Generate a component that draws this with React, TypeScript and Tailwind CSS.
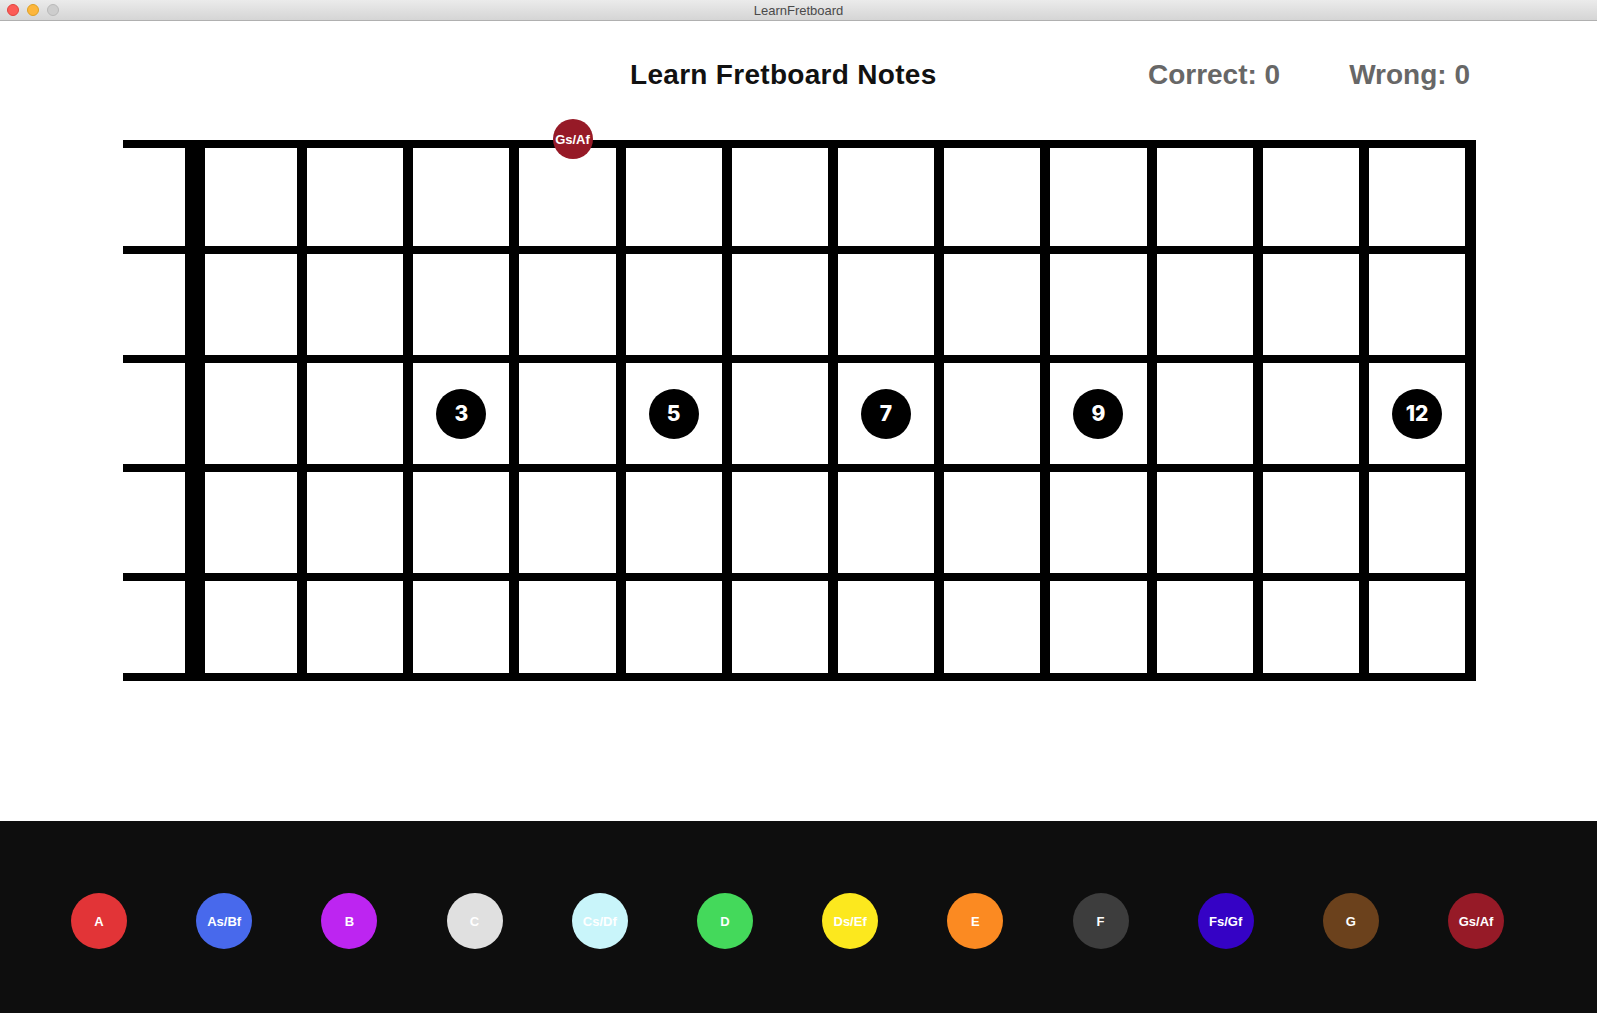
import React from "react";

const notes: { n: string; cls: string }[] = [
  { n: "A", cls: "bg-[#e23437]" },
  { n: "As/Bf", cls: "bg-[#4869ec]" },
  { n: "B", cls: "bg-[#bd25f1]" },
  { n: "C", cls: "bg-[#e0e0e0]" },
  { n: "Cs/Df", cls: "bg-[#c9f5fa]" },
  { n: "D", cls: "bg-[#44d95b]" },
  { n: "Ds/Ef", cls: "bg-[#fce81e]" },
  { n: "E", cls: "bg-[#fb8a22]" },
  { n: "F", cls: "bg-[#3d3d3d]" },
  { n: "Fs/Gf", cls: "bg-[#3502c5]" },
  { n: "G", cls: "bg-[#6b411c]" },
  { n: "Gs/Af", cls: "bg-[#961a27]" },
];

const rowHeights = ["h-[106px]", "h-[109px]", "h-[109px]", "h-[109px]", "h-[108px]"];
const markers: Record<number, string> = { 3: "3", 5: "5", 7: "7", 9: "9", 12: "12" };

function Marker({ label }: { label: string }) {
  return (
    <div className="w-[50px] h-[50px] rounded-full bg-black flex items-center justify-center text-white text-[21px] font-extrabold leading-none [font-family:Inter,'Noto_Sans',sans-serif]">
      {label}
    </div>
  );
}

function Row({ index }: { index: number }) {
  const last = index === 4;
  const cells = Array.from({ length: 12 }, (_, i) => i + 1);
  return (
    <div
      className={`flex border-t-8 border-black ${rowHeights[index]} ${last ? "border-b-8" : ""}`}
    >
      <div className="w-[62px] shrink-0 bg-white" />
      <div className="w-[20px] shrink-0 bg-black" />
      {cells.map((f) => (
        <div
          key={f}
          className={`${f === 1 ? "w-[102px] shrink-0" : "flex-1"} ${
            f === 12 ? "border-r-[11px]" : "border-r-[10px]"
          } border-black bg-white flex items-center justify-center`}
        >
          {index === 2 && markers[f] ? <Marker label={markers[f]} /> : null}
        </div>
      ))}
    </div>
  );
}

export default function App() {
  return (
    <div className="w-full h-[1013px] bg-white flex flex-col overflow-hidden [font-family:'Liberation_Sans',Arial,sans-serif]">
      {/* window title bar */}
      <div className="h-[21px] shrink-0 relative bg-gradient-to-b from-[#ebebeb] to-[#d5d5d5] border-b border-[#b0b0b0] flex items-center justify-center">
        <div className="absolute left-[7px] top-[4px] flex gap-[8px]">
          <div className="w-[12px] h-[12px] rounded-full bg-[#fc5b57] border border-[#e0443e]" />
          <div className="w-[12px] h-[12px] rounded-full bg-[#fdb63c] border border-[#dea123]" />
          <div className="w-[12px] h-[12px] rounded-full bg-[#cdcdcd] border border-[#b9b9b9]" />
        </div>
        <span className="text-[13px] text-[#4a4a4a] leading-none">LearnFretboard</span>
      </div>

      {/* header */}
      <div className="mt-[39.5px] h-[28px] flex items-start pl-[630px] pr-[127px] text-[28px] font-bold leading-none">
        <span className="text-[#111111] tracking-[0.3px]">Learn Fretboard Notes</span>
        <span className="ml-auto text-[#676767]">Correct: 0</span>
        <span className="ml-[69px] text-[#676767]">Wrong: 0</span>
      </div>

      {/* fretboard */}
      <div className="relative mt-[51.5px] ml-[123px] w-[1353px]">
        {[0, 1, 2, 3, 4].map((i) => (
          <Row key={i} index={i} />
        ))}
        <div className="absolute left-[429.5px] top-[-21px] w-[40px] h-[40px] rounded-full bg-[#961a27] flex items-center justify-center">
          <span className="text-white text-[13px] font-bold leading-none whitespace-nowrap">Gs/Af</span>
        </div>
      </div>

      <div className="flex-1" />

      {/* note picker */}
      <div className="h-[192px] shrink-0 bg-[#0e0e0e] pt-[72px] pl-[71px] flex items-start gap-[69.2px]">
        {notes.map((n) => (
          <div
            key={n.n}
            className={`w-[56px] h-[56px] shrink-0 rounded-full ${n.cls} flex items-center justify-center`}
          >
            <span className="text-white text-[13px] font-bold leading-none whitespace-nowrap">{n.n}</span>
          </div>
        ))}
      </div>
    </div>
  );
}
